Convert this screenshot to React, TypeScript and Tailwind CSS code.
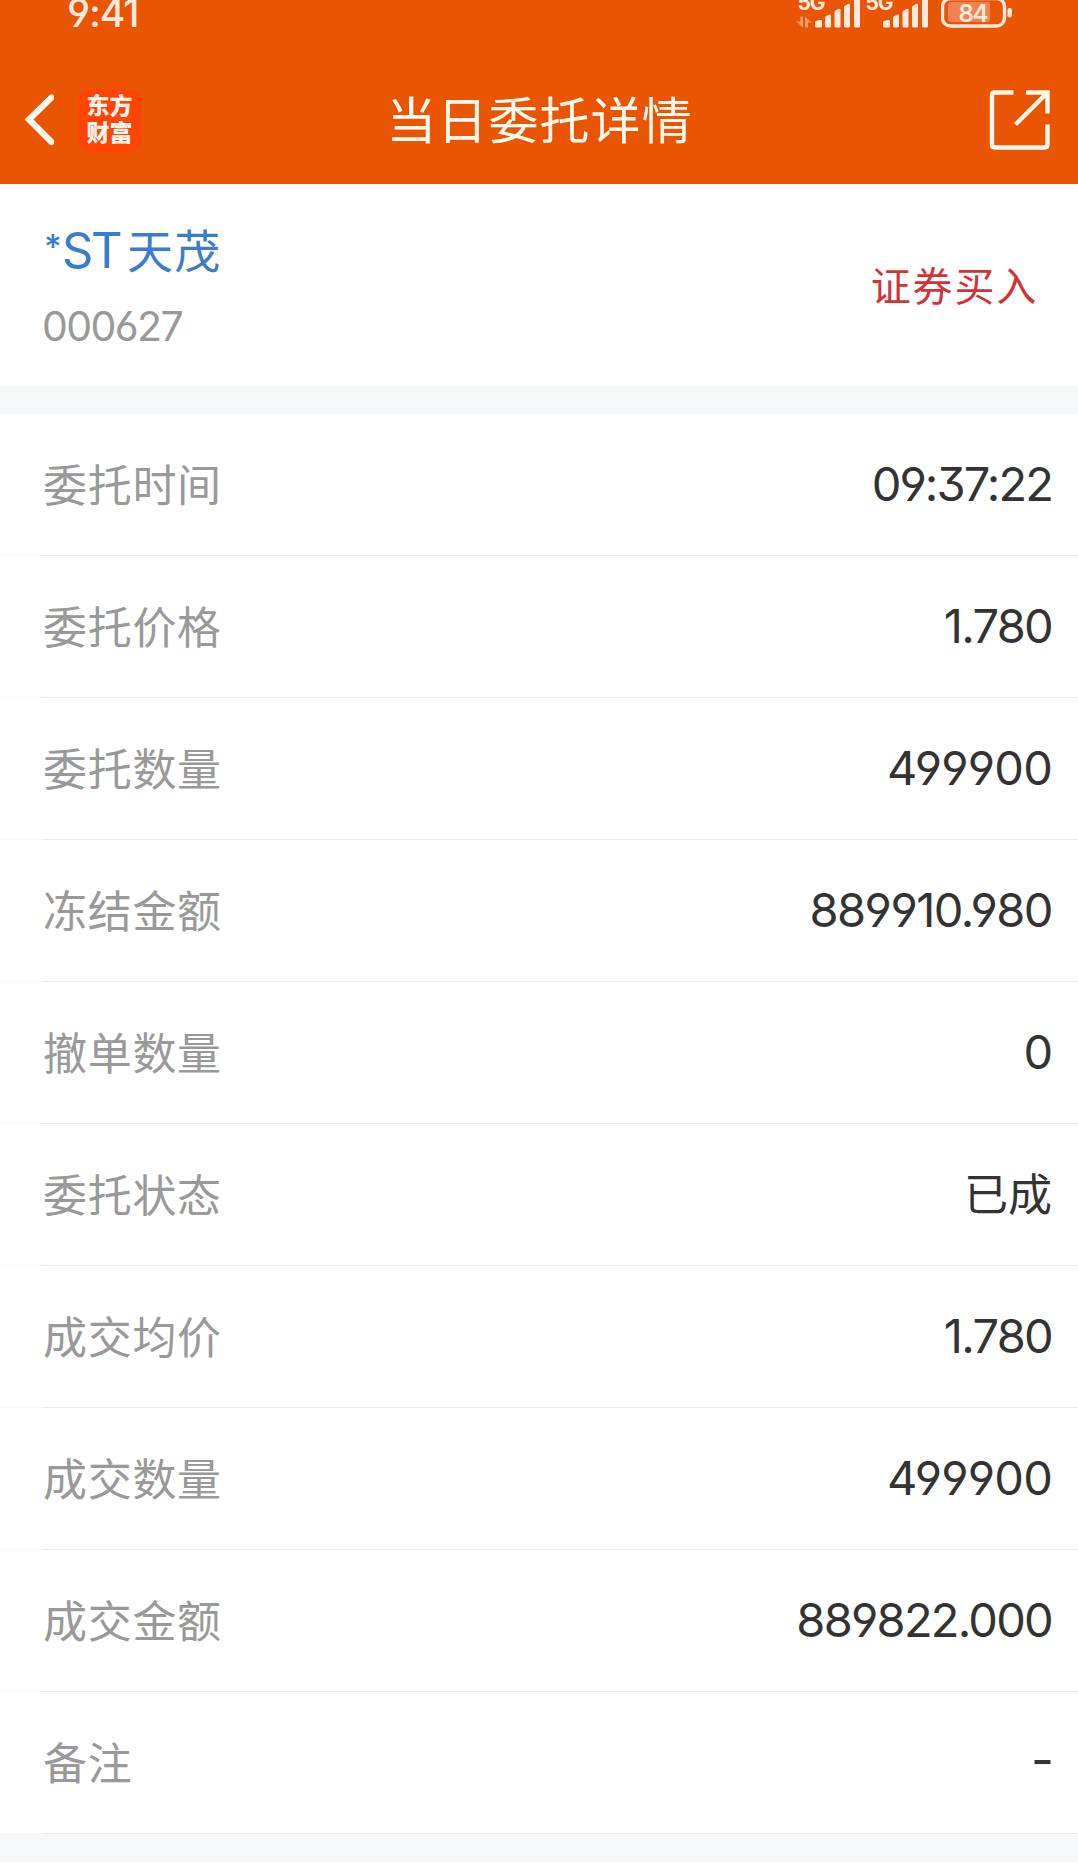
const rows = [
    { label: "委托时间", value: "09:37:22", className: "tracking-[-1.9px]" },
    { label: "委托价格", value: "1.780", className: "tracking-[-1.7px]" },
    { label: "委托数量", value: "499900", className: "tracking-[-0.8px]" },
    { label: "冻结金额", value: "889910.980", className: "tracking-[-1.5px]" },
    { label: "撤单数量", value: "0", className: "tracking-[-1.2px]" },
    { label: "委托状态", value: "已成", className: "inline-block pt-[2px] text-[44px]" },
    { label: "成交均价", value: "1.780", className: "tracking-[-1.7px]" },
    { label: "成交数量", value: "499900", className: "tracking-[-0.8px]" },
    { label: "成交金额", value: "889822.000", className: "tracking-[-1.75px]" },
    { label: "备注", value: "-", className: "-mr-[2px] inline-block pb-[4px] text-[50px]" },
]

const Bars = () => (
    <g fill="#ffe9dc">
        <path d="M0 22.5 Q0 21 1.5 20.8 L5 20 Q7 19.5 7 21 V26 Q7 27.5 5.5 27.5 H1.5 Q0 27.5 0 26Z" />
        <path d="M10 18 Q10 16.6 11.2 16 L14 14.8 Q16 14 16 16 V26 Q16 27.5 14.5 27.5 H11.5 Q10 27.5 10 26Z" />
        <path d="M19.5 12.5 Q19.5 11 20.8 10.3 L23.5 9 Q25.5 8.2 25.5 10 V26 Q25.5 27.5 24 27.5 H21 Q19.5 27.5 19.5 26Z" />
        <path d="M29 7.5 Q29 6 30.3 5.4 L33 4 Q35 3.2 35 5 V26 Q35 27.5 33.5 27.5 H30.5 Q29 27.5 29 26Z" />
        <path d="M39 -2 H45 V26 Q45 27.5 43.5 27.5 H40.5 Q39 27.5 39 26Z" />
    </g>
)

const Signal = () => (
    <svg width="134" height="28" viewBox="0 0 134 28" aria-hidden>
        <g fill="#ffe9dc" className="font-[Inter] text-[21px] font-bold">
            <text x="1.5" y="10" textLength="28">5G</text>
            <text x="69.5" y="10" textLength="28">5G</text>
        </g>
        <g fill="#ff9a68">
            <path d="M4.2 16.5 H7 V27.5 L0 21.5 H4.2Z" />
            <path d="M9 16.5 L16 22.5 H12 V27.5 H9Z" />
        </g>
        <g transform="translate(19 0)"><Bars /></g>
        <g transform="translate(87 0)"><Bars /></g>
    </svg>
)

const Battery = () => (
    <svg width="72" height="28" viewBox="0 0 72 28" aria-hidden>
        <rect x="1.5" y="-1.5" width="62" height="27.5" rx="8" fill="none" stroke="#ffe9dc" strokeWidth="3.4" />
        <rect x="7" y="2" width="42" height="20" rx="3" fill="#f28350" />
        <rect x="66.5" y="8" width="4.5" height="9.5" rx="2" fill="#ffe9dc" />
        <text x="17.5" y="21.5" textLength="30" fill="#ffe9dc" className="font-[Inter] text-[24px] font-semibold">84</text>
    </svg>
)

const StatusBar = () => (
    <div className="flex h-7 items-end justify-between overflow-hidden pl-[67px] pr-[65px]">
        <span className="-mb-1 text-[39px] font-medium leading-[38px] tracking-[-1.1px] text-[#ffe9dc]">9:41</span>
        <div className="flex gap-[11px]">
            <Signal />
            <Battery />
        </div>
    </div>
)

const Header = () => (
    <div className="h-[184px] bg-[#ea5504] text-white">
        <StatusBar />
        <div className="-mt-7 grid h-[184px] grid-cols-[1fr_auto_1fr] items-center pl-[24px] pr-[27px] pt-[56px]">
            <div className="flex items-center gap-[24px]">
                <svg width="30" height="52" viewBox="0 0 30 52" fill="none" stroke="#fff8f0" strokeWidth="6.2" strokeLinecap="round" strokeLinejoin="miter" aria-hidden>
                    <path d="M27.5 3.5 L5 25.5 L27.5 48" />
                </svg>
                <div className="flex h-[63px] w-[63px] flex-col items-center justify-center rounded-[13px] bg-[#ff4405] text-[23px] font-black leading-[27px] text-[#fff3ea]">
                    <span>东方</span>
                    <span>财富</span>
                </div>
            </div>
            <h1 className="pl-[4px] pt-[2px] text-[50px] leading-[60px] tracking-[1.1px] text-[#fff8ec]">当日委托详情</h1>
            <svg className="justify-self-end" width="62" height="62" viewBox="0 0 62 62" fill="none" stroke="#fff8ec" strokeWidth="4.4" aria-hidden>
                <path d="M24.5 3.5 H6 Q3 3.5 3 6.5 V55.5 Q3 58.5 6 58.5 H55.5 Q58.5 58.5 58.5 55.5 V35.5" />
                <path d="M37 3.5 H58.5 V24.5 M58.5 3.5 L26.5 35.5" />
            </svg>
        </div>
    </div>
)

const Stock = () => (
    <div className="flex h-[202px] items-center justify-between pl-[43px] pr-[40px]">
        <div className="flex flex-col pt-[7px]">
            <div className="flex h-[64px] items-baseline text-[#3b7dcc]">
                <span className="w-[19px] pl-px text-[34px] font-medium leading-[40px]"><span className="relative -top-[9px]">*</span></span>
                <span className="w-[65px] text-[49px] leading-[64px] tracking-[-2.5px]">ST</span>
                <span className="text-[46px] leading-[64px] tracking-[1.2px]">天茂</span>
            </div>
            <span className="-ml-px mt-[11px] text-[41px] leading-[64px] tracking-[-1.6px] text-[#999]">000627</span>
        </div>
        <span className="pt-[3px] text-[40px] tracking-[1.8px] text-[#cf3535]">证券买入</span>
    </div>
)

const App = () => {
    return <div className="min-h-[1870px] w-[1078px] overflow-hidden bg-white font-[Inter,'Noto_Sans_CJK_SC',sans-serif] [font-feature-settings:'cv03','cv04','cv09']">
        <Header />
        <Stock />
        <div className="h-7 bg-[#f6f8fa]" />
        {rows.map(({ label, value, className }) => (
            <div key={label} className="flex h-[142px] flex-col text-[47px]">
                <div className="flex flex-1 items-center justify-between pl-[43px] pr-[26px]">
                    <span className="pt-[2px] text-[44px] tracking-[0.7px] text-[#999]">{label}</span>
                    <span className="text-[#333]"><span className={className}>{value}</span></span>
                </div>
                <div className="flex h-px bg-[#f7f7f7]">
                    <div className="ml-[42px] flex-1 bg-[#ebebeb]" />
                </div>
            </div>
        ))}
        <div className="h-7 bg-[#f6f8fa]" />
    </div>
}

export default App
